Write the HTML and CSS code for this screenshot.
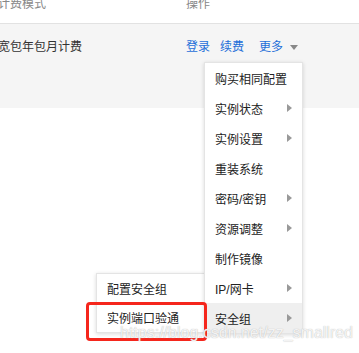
FILE: index.html
```html
<!DOCTYPE html>
<html lang="en">

<head>
    <meta charset="UTF-8">
    <meta name="viewport" content="width=device-width, initial-scale=1.0">
    <title>实例列表</title>
    <link rel="stylesheet" href="styles.css">
</head>

<body>
<div class="table">
    <div class="thead">
        <div class="col col-mode">计费模式</div>
        <div class="col col-op">操作</div>
    </div>
    <div class="trow">
        <div class="col col-mode">宽包年包月计费</div>
        <div class="col col-op">
            <a class="link">登录</a>
            <a class="link">续费</a>
            <a class="link more">更多<span class="caret"></span></a>
        </div>
    </div>
</div>

<ul class="menu">
    <li class="menu-item">购买相同配置</li>
    <li class="menu-item has-sub">实例状态<span class="arrow"></span></li>
    <li class="menu-item has-sub">实例设置<span class="arrow"></span></li>
    <li class="menu-item">重装系统</li>
    <li class="menu-item has-sub">密码/密钥<span class="arrow"></span></li>
    <li class="menu-item has-sub">资源调整<span class="arrow"></span></li>
    <li class="menu-item">制作镜像</li>
    <li class="menu-item has-sub">IP/网卡<span class="arrow"></span></li>
    <li class="menu-item has-sub active">安全组<span class="arrow"></span></li>
</ul>

<ul class="submenu">
    <li class="menu-item">配置安全组</li>
    <li class="menu-item">实例端口验通</li>
</ul>

<div class="mark"></div>
<div class="watermark">https://blog.csdn.net/zz_smallred</div>
</body>

</html>
```

FILE: styles.css
```css
* {
    padding: 0;
    margin: 0;
    box-sizing: border-box;
}

body {
    font-family: "Liberation Sans", "Noto Sans CJK SC", sans-serif;
    font-size: 12px;
    color: #333;
    background: #fff;
    overflow: hidden;
}

.table {
    margin-left: -2px;
}

.thead, .trow {
    display: flex;
    align-items: flex-start;
    line-height: 12px;
}

.thead {
    height: 26px;
    margin-top: -2px;
    color: #888;
    border-bottom: 1px solid #e2e2e2;
}

.trow {
    height: 84px;
    padding-top: 17px;
    background: #f5f5f5;
}

.col-mode {
    width: 188px;
}

.col-op {
    display: flex;
    align-items: center;
}

.link {
    color: #1e6fd9;
    margin-right: 10px;
}

.link.more {
    margin-left: 5px;
    display: flex;
    align-items: center;
}

.caret {
    width: 0;
    height: 0;
    margin-left: 7px;
    margin-top: 1px;
    border-left: 4px solid transparent;
    border-right: 4px solid transparent;
    border-top: 5px solid #888;
}

ul {
    list-style: none;
}

.menu, .submenu {
    position: absolute;
    background: #fff;
    border: 1px solid #e4e4e4;
    box-shadow: 0 1px 4px rgba(0, 0, 0, 0.15);
}

.menu {
    left: 204px;
    top: 62px;
    width: 99px;
    z-index: 2;
}

.submenu {
    left: 96px;
    top: 273px;
    width: 109px;
    z-index: 1;
}

.menu-item {
    display: flex;
    align-items: center;
    justify-content: space-between;
    height: 30px;
    padding: 0 10px;
    color: #222;
    white-space: nowrap;
}

.submenu .menu-item {
    height: 29px;
}

.menu-item.active {
    background: #efefef;
}

.arrow {
    width: 0;
    height: 0;
    border-top: 4px solid transparent;
    border-bottom: 4px solid transparent;
    border-left: 5px solid #999;
}

.mark {
    position: absolute;
    left: 86px;
    top: 302px;
    width: 121px;
    height: 39px;
    border: 3px solid #f5261c;
    border-radius: 4px;
    z-index: 3;
}

.watermark {
    position: absolute;
    left: 120px;
    top: 324px;
    font-size: 16px;
    line-height: 18px;
    color: rgba(255, 255, 255, 0.85);
    text-shadow: 0 0 1px #aaa;
    z-index: 4;
}
```
